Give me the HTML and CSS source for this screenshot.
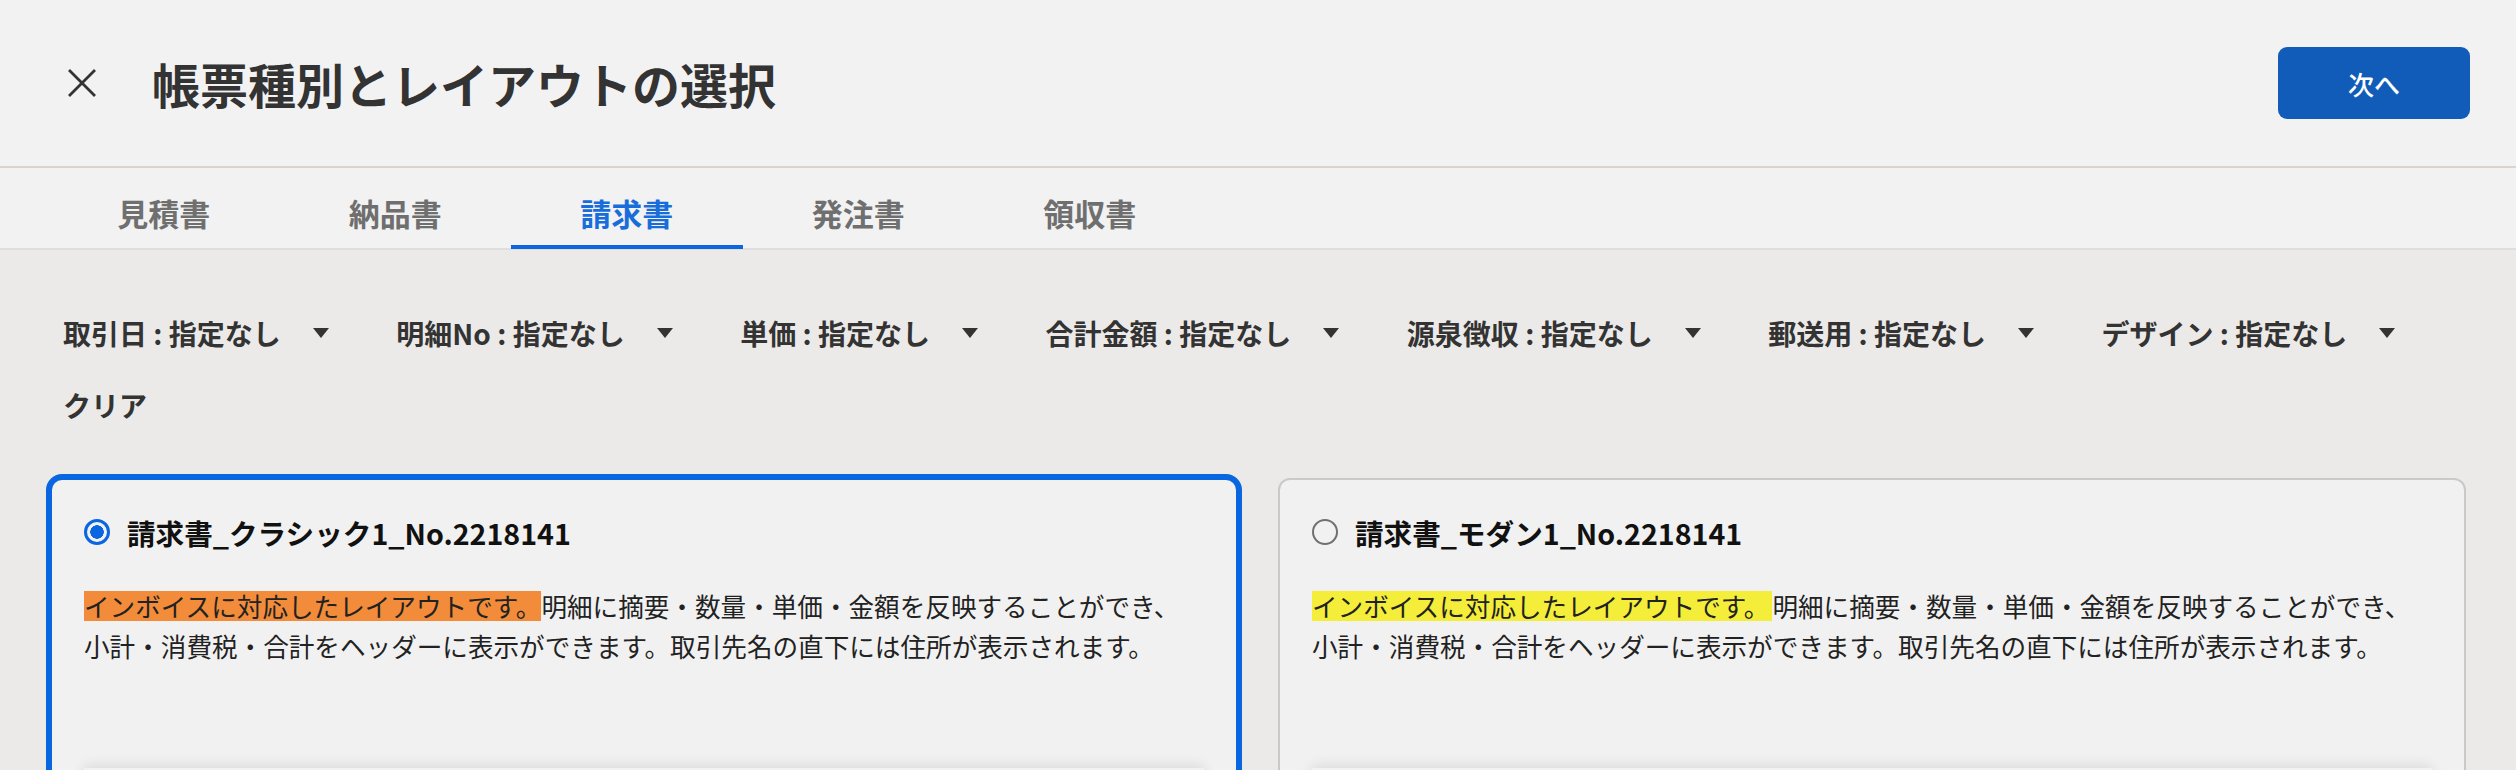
FILE: index.html
```html
<!DOCTYPE html>
<html lang="ja">
<head>
<meta charset="utf-8">
<title>帳票種別とレイアウトの選択</title>
<link rel="stylesheet" href="styles.css">
</head>
<body>
<header class="topbar">
  <button class="close-btn" aria-label="閉じる">
    <svg viewBox="0 0 28 28" width="28" height="28"><path d="M2 2 L26 26 M26 2 L2 26" stroke="#333" stroke-width="2.8" stroke-linecap="square" fill="none"/></svg>
  </button>
  <h1 class="page-title">帳票種別とレイアウトの選択</h1>
  <button class="next-btn">次へ</button>
</header>
<nav class="tabs">
  <button class="tab">見積書</button>
  <button class="tab">納品書</button>
  <button class="tab tab--active">請求書</button>
  <button class="tab">発注書</button>
  <button class="tab">領収書</button>
</nav>
<main class="content">
  <div class="filters">
    <button class="filter">取引日 : 指定なし<svg class="caret" viewBox="0 0 16 10" width="16" height="10"><path d="M0 0 H16 L8 10 Z" fill="#333"/></svg></button>
    <button class="filter">明細No : 指定なし<svg class="caret" viewBox="0 0 16 10" width="16" height="10"><path d="M0 0 H16 L8 10 Z" fill="#333"/></svg></button>
    <button class="filter">単価 : 指定なし<svg class="caret" viewBox="0 0 16 10" width="16" height="10"><path d="M0 0 H16 L8 10 Z" fill="#333"/></svg></button>
    <button class="filter">合計金額 : 指定なし<svg class="caret" viewBox="0 0 16 10" width="16" height="10"><path d="M0 0 H16 L8 10 Z" fill="#333"/></svg></button>
    <button class="filter">源泉徴収 : 指定なし<svg class="caret" viewBox="0 0 16 10" width="16" height="10"><path d="M0 0 H16 L8 10 Z" fill="#333"/></svg></button>
    <button class="filter">郵送用 : 指定なし<svg class="caret" viewBox="0 0 16 10" width="16" height="10"><path d="M0 0 H16 L8 10 Z" fill="#333"/></svg></button>
    <button class="filter">デザイン : 指定なし<svg class="caret" viewBox="0 0 16 10" width="16" height="10"><path d="M0 0 H16 L8 10 Z" fill="#333"/></svg></button>
  </div>
  <button class="clear-btn">クリア</button>
  <div class="cards">
    <section class="card card--selected">
      <div class="card-head">
        <span class="radio radio--on"></span>
        <h2 class="card-title">請求書_クラシック1_No.2218141</h2>
      </div>
      <p class="card-desc"><span class="mark mark--orange">インボイスに対応したレイアウトです。</span>明細に摘要・数量・単価・金額を反映することができ、<br>小計・消費税・合計をヘッダーに表示ができます。取引先名の直下には住所が表示されます。</p>
      <div class="preview"></div>
    </section>
    <section class="card">
      <div class="card-head">
        <span class="radio"></span>
        <h2 class="card-title">請求書_モダン1_No.2218141</h2>
      </div>
      <p class="card-desc"><span class="mark mark--yellow">インボイスに対応したレイアウトです。</span>明細に摘要・数量・単価・金額を反映することができ、<br>小計・消費税・合計をヘッダーに表示ができます。取引先名の直下には住所が表示されます。</p>
      <div class="preview"></div>
    </section>
  </div>
</main>
</body>
</html>
```
FILE: styles.css
```css
* { box-sizing: border-box; }

html, body {
  margin: 0;
  padding: 0;
  height: 770px;
  overflow: hidden;
}

body {
  background: #ebeae8;
  font-family: "Noto Sans CJK JP", "Noto Sans", sans-serif;
  color: #333;
}

button {
  font: inherit;
  color: inherit;
  background: none;
  border: none;
  padding: 0;
  margin: 0;
  cursor: pointer;
}

/* Header */
.topbar {
  height: 168px;
  background: #f2f2f2;
  border-bottom: 2px solid #d9d5cd;
  display: flex;
  align-items: center;
  padding: 0 46px 0 68px;
}

.close-btn {
  width: 28px;
  height: 28px;
  display: flex;
}

.page-title {
  margin: 0 0 0 56px;
  font-size: 48px;
  font-weight: 700;
  color: #333;
  line-height: 1;
  flex: 1;
}

.next-btn {
  width: 192px;
  height: 72px;
  border-radius: 9px;
  background: #125cb9;
  color: #fff;
  font-size: 26px;
  font-weight: 500;
}

/* Tabs */
.tabs {
  height: 82px;
  background: #f2f2f2;
  border-bottom: 2px solid #dedede;
  display: flex;
  padding-left: 48px;
}

.tab {
  position: relative;
  width: 231.5px;
  height: 80px;
  padding-top: 9px;
  font-size: 31px;
  font-weight: 700;
  color: #6f6f6f;
}

.tab--active {
  color: #186ddb;
}

.tab--active::after {
  content: "";
  position: absolute;
  left: 0;
  right: 0;
  bottom: -1px;
  height: 4px;
  background: #0b66e0;
}

/* Content */
.content {
  padding: 55px 50px 0;
}

.filters {
  display: flex;
  column-gap: 67.5px;
  padding-left: 13px;
}

.filter {
  display: inline-flex;
  align-items: center;
  gap: 32px;
  height: 56px;
  font-size: 28px;
  font-weight: 700;
  color: #333;
  white-space: nowrap;
}

.clear-btn {
  display: block;
  margin: 16px 0 0 13px;
  height: 56px;
  font-size: 28px;
  font-weight: 700;
  color: #333;
}

.cards {
  margin-top: 45px;
  display: grid;
  grid-template-columns: 1fr 1fr;
  column-gap: 40px;
  align-items: start;
}

.card {
  background: #f1f1f1;
  border: 2px solid #c9c9c9;
  border-radius: 12px;
  padding: 32px 32px 0;
  height: 600px;
}

.card--selected {
  border: 6px solid #0a66e0;
  border-radius: 16px;
  margin: -4px -4px 0;
}

.card-head {
  display: flex;
  align-items: center;
  height: 40px;
  gap: 17px;
}

.radio {
  width: 26px;
  height: 26px;
  border-radius: 50%;
  border: 2px solid #707070;
  flex: none;
}

.radio--on {
  border: 3px solid #0a66e0;
  background: radial-gradient(circle, #0a66e0 0 6.5px, transparent 7px);
}

.card-title {
  margin: 0;
  font-size: 28.6px;
  font-weight: 700;
  color: #111;
  line-height: 40px;
  position: relative;
  top: 1px;
}

.card-desc {
  margin: 34px 0 0;
  font-size: 25.6px;
  line-height: 40px;
  color: #222;
  white-space: nowrap;
}

.mark {
  display: inline-block;
  line-height: 30px;
  height: 30px;
}

.mark--orange { background: #f28c3a; }
.mark--yellow { background: #f4ee3a; padding-right: 3px; }

.preview {
  margin-top: 102px;
  height: 300px;
  background: #f1f1f1;
  box-shadow: 0 -3px 12px rgba(0, 0, 0, 0.09);
}
```
